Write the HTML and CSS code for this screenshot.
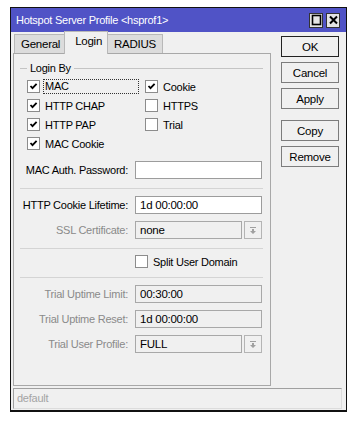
FILE: index.html
```html
<!DOCTYPE html>
<html lang="en">
<head>
    <meta charset="UTF-8">
    <meta name="viewport" content="width=device-width, initial-scale=1.0">
    <title>Hotspot Server Profile</title>
    <link rel="stylesheet" href="styles.css">
</head>
<body>

    <div class="window">
        <div class="titlebar">
            <span class="title">Hotspot Server Profile &lt;hsprof1&gt;</span>
            <div class="title-btns">
                <span class="tbtn">
                    <svg width="11" height="12" viewBox="0 0 11 12"><rect x="1.5" y="1.5" width="8" height="9" fill="none" stroke="#000" stroke-width="1.6"/></svg>
                </span>
                <span class="tbtn">
                    <svg width="11" height="12" viewBox="0 0 11 12"><path d="M2 2.5 L9 9.5 M9 2.5 L2 9.5" stroke="#000" stroke-width="2"/></svg>
                </span>
            </div>
        </div>

        <div class="content">
            <div class="main">
                <div class="tabs">
                    <div class="tab">General</div>
                    <div class="tab active">Login</div>
                    <div class="tab">RADIUS</div>
                </div>

                <div class="panel">
                    <div class="legend"><span>Login By</span></div>

                    <div class="checks">
                        <div class="check"><span class="box on"></span><span class="lbl focus">MAC</span></div>
                        <div class="check"><span class="box on"></span><span class="lbl">Cookie</span></div>
                        <div class="check"><span class="box on"></span><span class="lbl">HTTP CHAP</span></div>
                        <div class="check"><span class="box"></span><span class="lbl">HTTPS</span></div>
                        <div class="check"><span class="box on"></span><span class="lbl">HTTP PAP</span></div>
                        <div class="check"><span class="box"></span><span class="lbl">Trial</span></div>
                        <div class="check"><span class="box on"></span><span class="lbl">MAC Cookie</span></div>
                    </div>

                    <div class="field first">
                        <label>MAC Auth. Password:</label>
                        <div class="input"></div>
                    </div>

                    <div class="sep"></div>

                    <div class="field">
                        <label>HTTP Cookie Lifetime:</label>
                        <div class="input">1d 00:00:00</div>
                    </div>
                    <div class="field">
                        <label class="dim">SSL Certificate:</label>
                        <div class="combo">
                            <div class="input off">none</div>
                            <span class="drop"></span>
                        </div>
                    </div>

                    <div class="sep"></div>

                    <div class="field split">
                        <div class="check"><span class="box"></span><span class="lbl">Split User Domain</span></div>
                    </div>

                    <div class="sep"></div>

                    <div class="field">
                        <label class="dim">Trial Uptime Limit:</label>
                        <div class="input off">00:30:00</div>
                    </div>
                    <div class="field">
                        <label class="dim">Trial Uptime Reset:</label>
                        <div class="input off">1d 00:00:00</div>
                    </div>
                    <div class="field">
                        <label class="dim">Trial User Profile:</label>
                        <div class="combo">
                            <div class="input off">FULL</div>
                            <span class="drop"></span>
                        </div>
                    </div>
                </div>
            </div>

            <div class="side">
                <button class="btn default">OK</button>
                <button class="btn">Cancel</button>
                <button class="btn">Apply</button>
                <button class="btn spaced">Copy</button>
                <button class="btn">Remove</button>
            </div>
        </div>

        <div class="statusbar">default</div>
    </div>

</body>
</html>
```

FILE: styles.css
```css
body {
    margin: 0;
    background-color: #fff;
    font-family: "Liberation Sans", Arial, sans-serif;
    font-size: 11px;
    letter-spacing: -0.25px;
    color: #000;
}
.window {
    margin: 7px 0 0 10px;
    width: 335px;
    border: 1px solid #111;
    border-bottom-width: 2px;
    background-color: #f0f0f0;
}
.titlebar {
    height: 24px;
    background-color: #5053c6;
    display: flex;
    align-items: center;
    justify-content: space-between;
    padding: 0 6px 0 5px;
}
.title {
    color: #fff;
    font-size: 11px;
}
.title-btns {
    display: flex;
    gap: 3px;
}
.tbtn {
    width: 12px;
    height: 13px;
    background-color: #e4e4e4;
    border: 1px solid #333;
    display: flex;
    align-items: center;
    justify-content: center;
}
.content {
    display: flex;
    gap: 10px;
    padding: 0 2px;
}
.main {
    width: 258px;
}
.tabs {
    height: 21px;
    display: flex;
    align-items: flex-end;
    padding-left: 1px;
}
.tab {
    height: 18px;
    line-height: 18px;
    padding: 0 6px;
    background-color: #dcdcdc;
    border: 1px solid #b8b8b8;
    border-bottom: none;
    margin-right: -1px;
    font-size: 11.5px;
}
.tab:first-child {
    padding: 0 4px 0 6px;
}
.tab.active {
    height: 22px;
    line-height: 19px;
    background-color: #f0f0f0;
    position: relative;
    z-index: 1;
    margin-bottom: -1px;
    padding: 0 5px 0 10px;
}
.panel {
    height: 331px;
    border: 1px solid #a8a8a8;
    padding: 0 7px 0 6px;
}
.legend {
    margin-top: 7px;
    height: 14px;
    display: flex;
    align-items: center;
}
.legend::before {
    content: "";
    width: 7px;
    border-top: 1px solid #c4c4c4;
    margin-right: 3px;
}
.legend::after {
    content: "";
    flex: 1;
    border-top: 1px solid #c4c4c4;
    margin-left: 3px;
}
.checks {
    margin-top: 2px;
    padding-left: 7px;
    display: grid;
    grid-template-columns: 118px 1fr;
    grid-auto-rows: 19px;
}
.check {
    display: flex;
    align-items: center;
}
.box {
    width: 11px;
    height: 11px;
    border: 1px solid #8c8c8c;
    background-color: #fff;
    flex: none;
}
.box.on {
    background: #fff url("data:image/svg+xml,%3Csvg xmlns='http://www.w3.org/2000/svg' width='11' height='11'%3E%3Cpath d='M2.5 5 L4.5 7.2 L8.6 2.8' fill='none' stroke='%23000' stroke-width='1.8'/%3E%3C/svg%3E") no-repeat;
}
.lbl {
    margin-left: 5px;
    white-space: nowrap;
}
.lbl.focus {
    margin-left: 3px;
    width: 93px;
    padding-left: 1px;
    border: 1px dotted #333;
    line-height: 13px;
}
.field {
    display: grid;
    grid-template-columns: 108px 1fr;
    column-gap: 7px;
    align-items: center;
    height: 18px;
    margin-top: 7px;
    padding-right: 1px;
}
.field.first {
    margin-top: 8px;
}
.field label {
    text-align: right;
    white-space: nowrap;
}
.field label.dim {
    color: #8a8a8a;
}
.field.split {
    height: 13px;
    margin-top: 6px;
}
.field.split .check {
    grid-column: 2;
}
.input {
    height: 16px;
    line-height: 16px;
    border: 1px solid #9c9c9c;
    background-color: #fff;
    padding-left: 4px;
    font-size: 11.5px;
}
.input.off {
    background-color: #f0f0f0;
    border-color: #a8a8a8;
}
.combo {
    display: flex;
    gap: 2px;
}
.combo .input {
    flex: 1;
}
.drop {
    width: 16px;
    height: 16px;
    border: 1px solid #b4b4b4;
    background: #f0f0f0 url("data:image/svg+xml,%3Csvg xmlns='http://www.w3.org/2000/svg' width='16' height='16'%3E%3Cpath d='M5 5.5 H11' stroke='%23a0a0a0' stroke-width='1'/%3E%3Cpath d='M7 7 H9 V9 H11 L8 12 L5 9 H7 Z' fill='%23a0a0a0'/%3E%3C/svg%3E") no-repeat;
}
.sep {
    margin-top: 9px;
    border-top: 1px solid #d4d4d4;
}
.side {
    width: 58px;
    padding-top: 4px;
    display: flex;
    flex-direction: column;
    gap: 5px;
}
.btn {
    height: 21px;
    padding: 0;
    font-family: inherit;
    font-size: 11.5px;
    letter-spacing: -0.25px;
    background-color: #f0f0f0;
    border: 1px solid #7c7c7c;
    color: #000;
}
.btn.default {
    border-color: #222;
}
.btn.spaced {
    margin-top: 6px;
}
.statusbar {
    margin: 2px 4px 1px 2px;
    height: 19px;
    line-height: 19px;
    border: 1px solid #dcdcdc;
    border-top-color: #a0a0a0;
    border-left-color: #a0a0a0;
    padding-left: 3px;
    color: #a4a4a4;
}
```
